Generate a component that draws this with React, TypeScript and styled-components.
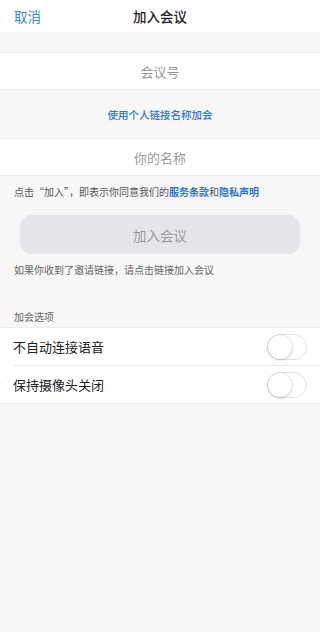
import React from "react";
import styled, { createGlobalStyle } from "styled-components";

const Global = createGlobalStyle`
  html, body { margin: 0; padding: 0; }
  body {
    font-family: "Noto Sans CJK SC", "Noto Sans", sans-serif;
    background: #f7f7f8;
  }
`;

const Page = styled.div`
  width: 320px;
  min-height: 632px;
  background: #f7f7f8;
  display: flex;
  flex-direction: column;
`;

const Header = styled.div`
  height: 32px;
  background: #fff;
  display: grid;
  grid-template-columns: 1fr auto 1fr;
  align-items: center;
  padding: 0 14px;
  box-sizing: border-box;
`;

const Cancel = styled.span`
  font-size: 13.5px;
  color: #3a86d8;
  justify-self: start;
`;

const Title = styled.span`
  font-size: 13.5px;
  font-weight: 500;
  color: #222;
`;

const Gap = styled.div<{ $h: number }>`
  height: ${(p) => p.$h}px;
`;

const Field = styled.div<{ $h: number }>`
  height: ${(p) => p.$h}px;
  background: #fff;
  border-top: 1px solid #eeeeee;
  border-bottom: 1px solid #eeeeee;
  display: flex;
  align-items: center;
  justify-content: center;
  box-sizing: border-box;
  font-size: 13px;
  color: #9a9a9a;
`;

const LinkRow = styled.div`
  height: 48px;
  display: flex;
  align-items: center;
  justify-content: center;
  font-size: 10.5px;
  font-weight: 500;
  color: #2f74d0;
`;

const Note = styled.div<{ $top: number }>`
  padding: ${(p) => p.$top}px 14px 0;
  font-size: 10px;
  color: #555;
  line-height: 14px;
`;

const Blue = styled.span`
  color: #2f74d0;
  font-weight: 600;
`;

const JoinButton = styled.div`
  margin: 16px 20px 0;
  height: 39px;
  border-radius: 12px;
  background: #e6e6ea;
  display: flex;
  align-items: center;
  justify-content: center;
  font-size: 13.5px;
  color: #9a9a9e;
`;

const Hint = styled.div`
  padding: 9px 14px 0;
  font-size: 10px;
  color: #666;
  line-height: 14px;
`;

const SectionLabel = styled.div`
  padding: 33px 14px 3px;
  font-size: 10px;
  color: #666;
  line-height: 14px;
`;

const Options = styled.div`
  background: #fff;
  border-top: 1px solid #eeeeee;
  border-bottom: 1px solid #eeeeee;
`;

const OptionRow = styled.div<{ $last?: boolean }>`
  height: 37px;
  margin-left: 13px;
  padding-right: 13px;
  display: flex;
  align-items: center;
  justify-content: space-between;
  border-bottom: ${(p) => (p.$last ? "none" : "1px solid #eeeeee")};
  font-size: 13px;
  color: #222;
`;

const Toggle = styled.div`
  width: 40px;
  height: 26px;
  border-radius: 13px;
  border: 1px solid #e4e4e4;
  background: #fff;
  position: relative;
  box-sizing: border-box;
`;

const Knob = styled.div`
  position: absolute;
  left: 0;
  top: 0;
  width: 24px;
  height: 24px;
  border-radius: 50%;
  background: #fff;
  box-shadow: 0 1px 3px rgba(0, 0, 0, 0.22), 0 0 0 0.5px rgba(0, 0, 0, 0.08);
`;

export default function App() {
  return (
    <Page>
      <Global />
      <Header>
        <Cancel>取消</Cancel>
        <Title>加入会议</Title>
        <span />
      </Header>
      <Gap $h={20} />
      <Field $h={38}>会议号</Field>
      <LinkRow>使用个人链接名称加会</LinkRow>
      <Field $h={38}>你的名称</Field>
      <Note $top={9}>
        点击“加入”，即表示你同意我们的<Blue>服务条款</Blue>和<Blue>隐私声明</Blue>
      </Note>
      <JoinButton>加入会议</JoinButton>
      <Hint>如果你收到了邀请链接，请点击链接加入会议</Hint>
      <SectionLabel>加会选项</SectionLabel>
      <Options>
        <OptionRow>
          不自动连接语音
          <Toggle>
            <Knob />
          </Toggle>
        </OptionRow>
        <OptionRow $last>
          保持摄像头关闭
          <Toggle>
            <Knob />
          </Toggle>
        </OptionRow>
      </Options>
    </Page>
  );
}
